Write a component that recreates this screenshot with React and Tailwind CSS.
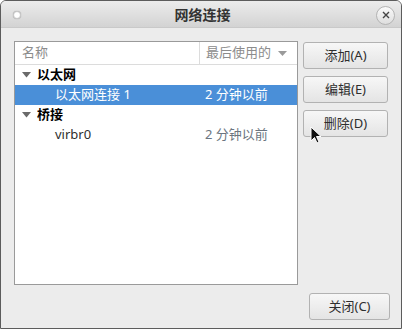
const font = { fontFamily: '"Noto Sans", "Noto Sans CJK SC", sans-serif' };

const Triangle = () => (
  <svg width="9" height="6" viewBox="0 0 9 6" className="shrink-0">
    <path d="M0 0 H9 L4.5 5.5 Z" fill="#6a6a6a" />
  </svg>
);

const Button = ({ children, className = "" }) => (
  <button
    className={`h-[27px] rounded-[3px] border border-[#b2b2b2] bg-gradient-to-b from-[#f7f7f7] to-[#e4e4e4] text-[13px] text-[#2e2e2e] flex items-center justify-center ${className}`}
  >
    {children}
  </button>
);

export default function App() {
  const rows = [
    { kind: "group", name: "以太网" },
    { kind: "item", name: "以太网连接 1", time: "2 分钟以前", selected: true },
    { kind: "group", name: "桥接" },
    { kind: "item", name: "virbr0", time: "2 分钟以前" },
  ];

  return (
    <div className="w-[402px] h-[329px] bg-white" style={font}>
      <div className="relative w-[402px] h-[329px] border border-[#5c5c5c] rounded-t-[6px] bg-[#ececec] flex flex-col overflow-hidden">
        {/* title bar */}
        <div className="h-[27px] shrink-0 bg-gradient-to-b from-[#ececec] to-[#d3d3d3] border-b border-[#c9c9c9] flex items-center pl-[12px] pr-[6px]">
          <div className="w-[8px] h-[8px] mt-[2px] rounded-full bg-white border border-[#c8c8c8] shadow-[0_0_1px_#999]" />
          <div className="flex-1 text-center text-[14px] font-bold text-[#333] pl-[8px]">网络连接</div>
          <div className="w-[19px] h-[19px] mt-[2px] rounded-full border border-[#b3b3b3] bg-gradient-to-b from-[#fafafa] to-[#dedede] flex items-center justify-center">
            <svg width="8" height="8" viewBox="0 0 8 8">
              <path d="M1 1 L7 7 M7 1 L1 7" stroke="#444" strokeWidth="1.4" />
            </svg>
          </div>
        </div>

        {/* body */}
        <div className="flex pl-[13px] pt-[13px]">
          <div className="w-[284px] h-[244px] border border-[#9a9a9a] bg-white">
            <div className="h-[23px] flex border-b border-[#dcdcdc] text-[13px] text-[#8c8c8c]">
              <div className="w-[185px] border-r border-[#dcdcdc] pl-[7px] flex items-center">名称</div>
              <div className="flex-1 pl-[6px] pr-[10px] flex items-center justify-between">
                <span>最后使用的</span>
                <svg width="9" height="5" viewBox="0 0 9 5">
                  <path d="M0 0 H9 L4.5 5 Z" fill="#9a9a9a" />
                </svg>
              </div>
            </div>
            {rows.map((r, i) =>
              r.kind === "group" ? (
                <div key={i} className="h-[20px] flex items-center pl-[7px] gap-[6px] text-[13px] font-bold text-black">
                  <Triangle />
                  <span>{r.name}</span>
                </div>
              ) : (
                <div
                  key={i}
                  className={`h-[20px] flex items-center text-[13px] ${
                    r.selected ? "bg-[#4a8fd8] text-white" : "text-[#2e2e2e]"
                  }`}
                >
                  <div className="w-[185px] pl-[40px]">{r.name}</div>
                  <div className={`pl-[5px] ${r.selected ? "text-white" : "text-[#6b7580]"}`}>{r.time}</div>
                </div>
              )
            )}
          </div>

          <div className="ml-[5px] flex flex-col gap-[7px] pt-[1px]">
            <Button className="w-[85px]">添加(A)</Button>
            <Button className="w-[85px]">编辑(E)</Button>
            <Button className="w-[85px]">删除(D)</Button>
          </div>
        </div>

        <div className="flex justify-end pr-[11px] pt-[8px]">
          <Button className="w-[81px]">关闭(C)</Button>
        </div>

        {/* mouse pointer */}
        <svg className="absolute left-[309px] top-[125px]" width="12" height="19" viewBox="0 0 12 19">
          <path d="M1 1 L1 15 L4.5 11.5 L7 17 L9 16 L6.5 10.5 L11 10.5 Z" fill="#111" stroke="#fff" strokeWidth="1" />
        </svg>
      </div>
    </div>
  );
}
